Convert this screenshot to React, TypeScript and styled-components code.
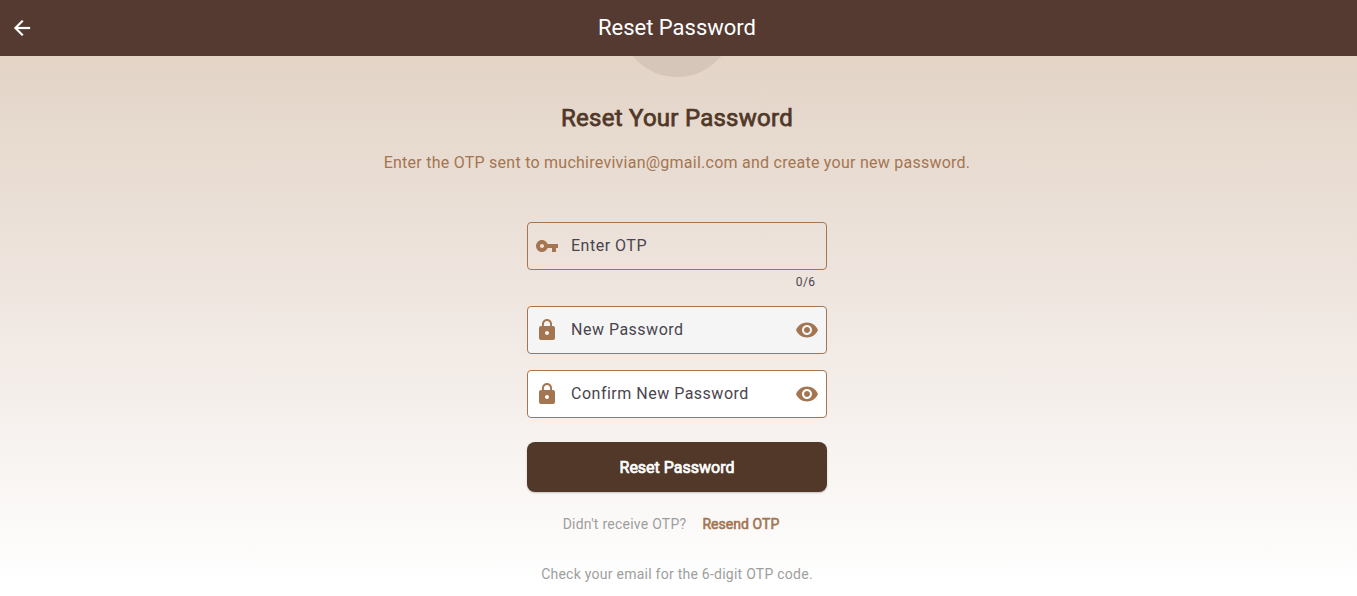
import React from 'react';
import styled, { createGlobalStyle } from 'styled-components';

const Global = createGlobalStyle`
  * { box-sizing: border-box; }
  body { margin: 0; font-family: Roboto, sans-serif; overflow: hidden; }
`;
const Page = styled.div`
  height: 596px;
  display: flex;
  flex-direction: column;
  overflow: hidden;
`;
const AppBar = styled.header`
  height: 56px;
  flex: none;
  display: grid;
  grid-template-columns: 44px 1fr 47px;
  align-items: center;
  background: #543a31;
  color: #fff;
`;
const BackButton = styled.button`
  display: flex;
  justify-content: center;
  padding: 0;
  border: 0;
  background: none;
  color: inherit;
  stroke: currentColor;
  stroke-width: 0.2;
`;
const BarTitle = styled.h1`
  margin: 0;
  font-size: 22px;
  line-height: 28px;
  font-weight: 400;
  text-align: center;
`;
const Body = styled.main`
  flex: 1;
  min-height: 0;
  padding-right: 3px;
  display: flex;
  flex-direction: column;
  align-items: center;
  background: linear-gradient(#e3d4c6, #efe6e0 45%, #ffffff 98%);
`;
const BadgeClip = styled.div`
  height: 21px;
  width: 120px;
  flex: none;
  display: flex;
  align-items: flex-end;
  justify-content: center;
  overflow: hidden;
`;
const Badge = styled.div`
  width: 114px;
  height: 114px;
  flex: none;
  border-radius: 50%;
  background: #d5c6b9;
`;
const Heading = styled.h2`
  margin: 25px 0 0;
  font-size: 24px;
  line-height: 32px;
  font-weight: 400;
  letter-spacing: 0.25px;
  -webkit-text-stroke: 0.75px currentColor;
  color: #503828;
`;
const Lead = styled.p`
  margin: 17px 0 0;
  font-size: 16px;
  line-height: 24px;
  letter-spacing: 0.25px;
  color: #a47551;
`;
const Form = styled.form`
  width: 300px;
  margin-top: 47px;
  display: flex;
  flex-direction: column;
`;
const Field = styled.label<{ $fill: string; $gap: number }>`
  height: 48px;
  margin-top: ${(p) => p.$gap}px;
  padding: 0 7px;
  display: flex;
  align-items: center;
  border: 1px solid #a47551;
  border-radius: 4px;
  background: ${(p) => p.$fill};
  color: #a47551;
`;
const FieldText = styled.span`
  flex: 1;
  margin-left: 12px;
  font-size: 16px;
  line-height: 24px;
  letter-spacing: 0.5px;
  color: #49454f;
`;
const Counter = styled.div`
  height: 16px;
  margin: 4px 11.5px 0;
  text-align: right;
  font-size: 12px;
  line-height: 16px;
  letter-spacing: 0.4px;
  color: #49454f;
`;
const Submit = styled.button`
  height: 50px;
  margin-top: 24px;
  padding: 2px 0 0;
  border: 0;
  border-radius: 8px;
  background: #513828;
  box-shadow: 0 1px 2px rgba(0, 0, 0, 0.22);
  color: #fff;
  font: 400 16px/24px Roboto, sans-serif;
  -webkit-text-stroke: 0.7px currentColor;
`;
const ResendRow = styled.div`
  margin-top: 22px;
  padding-right: 12px;
  display: flex;
  align-items: center;
  font-size: 14px;
  line-height: 20px;
  letter-spacing: 0.25px;
  color: #9e9e9e;
`;
const Resend = styled.a`
  margin-left: 16px;
  letter-spacing: 0.05px;
  -webkit-text-stroke: 0.6px currentColor;
  color: #a47551;
`;
const Hint = styled.p`
  margin: 30px 0 0;
  font-size: 14px;
  line-height: 20px;
  letter-spacing: 0.25px;
  color: #9e9e9e;
`;

const paths = {
  back: 'M20 11H7.83l5.59-5.59L12 4l-8 8 8 8 1.41-1.41L7.83 13H20v-2z',
  key: 'M12.65 10C11.83 7.67 9.61 6 7 6c-3.31 0-6 2.69-6 6s2.69 6 6 6c2.61 0 4.83-1.67 5.65-4H17v4h4v-4h2v-4H12.65zM7 14c-1.1 0-2-.9-2-2s.9-2 2-2 2 .9 2 2-.9 2-2 2z',
  lock: 'M18 8h-1V6c0-2.76-2.24-5-5-5S7 3.24 7 6v2H6c-1.1 0-2 .9-2 2v10c0 1.1.9 2 2 2h12c1.1 0 2-.9 2-2V10c0-1.1-.9-2-2-2zm-6 9c-1.1 0-2-.9-2-2s.9-2 2-2 2 .9 2 2-.9 2-2 2zm3.1-9H8.9V6c0-1.71 1.39-3.1 3.1-3.1 1.71 0 3.1 1.39 3.1 3.1v2z',
  eye: 'M12 4.5C7 4.5 2.73 7.61 1 12c1.73 4.39 6 7.5 11 7.5s9.27-3.11 11-7.5c-1.73-4.39-6-7.5-11-7.5zM12 17c-2.76 0-5-2.24-5-5s2.24-5 5-5 5 2.24 5 5-2.24 5-5 5zm0-8c-1.66 0-3 1.34-3 3s1.34 3 3 3 3-1.34 3-3-1.34-3-3-3z',
};

const Icon = ({ name }: { name: keyof typeof paths }) => (
  <svg width="24" height="24" viewBox="0 0 24 24" fill="currentColor" aria-hidden="true">
    <path d={paths[name]} />
  </svg>
);

export default function App() {
  return (
    <Page>
      <Global />
      <AppBar>
        <BackButton aria-label="Back"><Icon name="back" /></BackButton>
        <BarTitle>Reset Password</BarTitle>
      </AppBar>
      <Body>
        <BadgeClip><Badge /></BadgeClip>
        <Heading>Reset Your Password</Heading>
        <Lead>Enter the OTP sent to muchirevivian@gmail.com and create your new password.</Lead>
        <Form>
          <Field $fill="transparent" $gap={0}>
            <Icon name="key" />
            <FieldText>Enter OTP</FieldText>
          </Field>
          <Counter>0/6</Counter>
          <Field $fill="#f5f5f5" $gap={16}>
            <Icon name="lock" />
            <FieldText>New Password</FieldText>
            <Icon name="eye" />
          </Field>
          <Field $fill="#ffffff" $gap={16}>
            <Icon name="lock" />
            <FieldText>Confirm New Password</FieldText>
            <Icon name="eye" />
          </Field>
          <Submit type="button">Reset Password</Submit>
        </Form>
        <ResendRow>
          Didn't receive OTP?
          <Resend>Resend OTP</Resend>
        </ResendRow>
        <Hint>Check your email for the 6-digit OTP code.</Hint>
      </Body>
    </Page>
  );
}
